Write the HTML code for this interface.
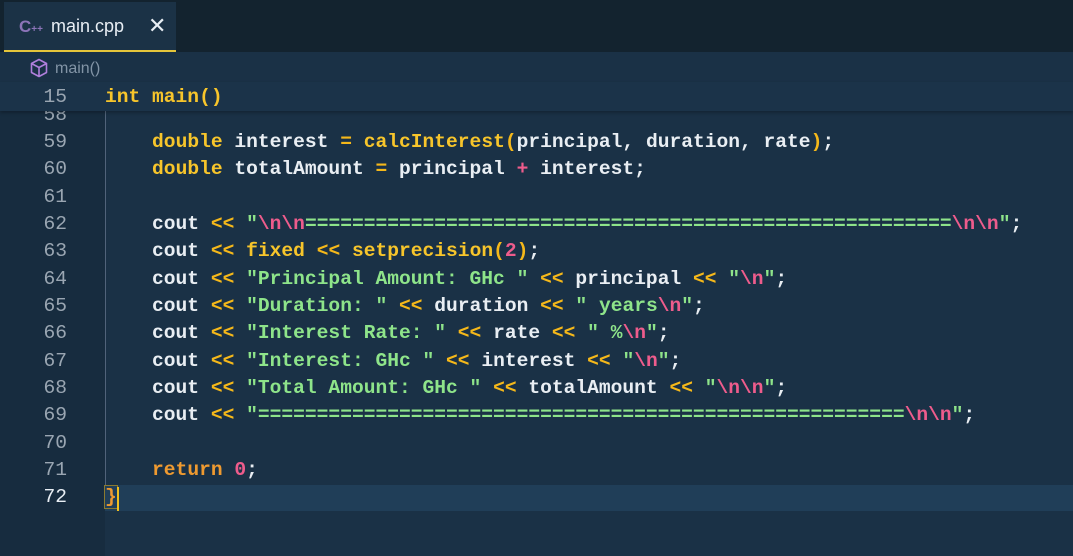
<!DOCTYPE html>
<html><head><meta charset="utf-8"><style>
html,body{margin:0;padding:0;width:1073px;height:556px;overflow:hidden;background:#1a3146;}
.tabbar{position:absolute;left:0;top:0;width:1073px;height:52px;background:#13232f;}
.tab{position:absolute;left:4px;top:2px;width:172px;height:48px;background:#1b3246;border-bottom:2px solid #e5c53a;}
.tab .ic{position:absolute;left:15px;top:15px;font:bold 17px "Liberation Sans",sans-serif;color:#8c74b8;}
.tab .ic small{font-size:10px;}
.tab .nm{position:absolute;left:47px;top:14px;font:18px "Liberation Sans",sans-serif;color:#e8eef4;}
.tab .x{position:absolute;left:144px;top:11px;font:22px "Liberation Sans",sans-serif;color:#e8eef4;}
.gutter{position:absolute;left:0;top:52px;width:105px;height:504px;background:#172c3f;}
.bc{position:absolute;left:0;top:52px;width:1073px;height:30px;background:#1a3146;}
.bc span{position:absolute;left:55px;top:8px;font:16px "Liberation Sans",sans-serif;color:#8294a6;}
.sticky{position:absolute;left:0;top:82px;width:1073px;height:29px;background:#1b3349;box-shadow:0 2px 3px rgba(0,0,0,.25);z-index:3;}
.cur{position:absolute;left:105px;top:485px;width:968px;height:26px;background:#203e58;}
.guide{position:absolute;left:105px;top:111px;width:1px;height:374px;background:#51637a;}
.ln{position:absolute;left:0;width:67px;text-align:right;font:19.6px "Liberation Mono",monospace;color:#9aa6b2;}
.code{position:absolute;left:105px;font:bold 19.6px "Liberation Mono",monospace;color:#e9eef3;white-space:pre;}
.k{color:#f7c52b}.o{color:#f5b81a}.s{color:#8ee48a}.e{color:#ee5c8c}.n{color:#ee5c8c}.r{color:#ef9a30}
</style></head><body>
<div class="tabbar"><div class="tab"><span class="ic">C<small>++</small></span><span class="nm">main.cpp</span><span class="x">✕</span></div></div>
<div class="gutter"></div>
<div class="bc"><svg style="position:absolute;left:30px;top:58px" width="18" height="20"></svg><span>main()</span></div>
<svg style="position:absolute;left:30px;top:58px;z-index:4" width="18" height="20" viewBox="0 0 18 20"><path d="M9 1.5L16.5 5.5V14.5L9 18.5L1.5 14.5V5.5Z M1.5 5.5L9 9.5L16.5 5.5 M9 9.5V18.5" fill="none" stroke="#b07fdc" stroke-width="1.6" stroke-linejoin="round"/></svg>
<div class="sticky"><div class="ln" style="top:4px">15</div><div class="code" style="top:4px"><span class="k">int main()</span></div></div>
<div class="cur"></div>
<div class="guide"></div>
<div class="ln" style="top:104px;">58</div>
<div id="lines"></div>
<div class="ln" style="top:131px">59</div><div class="code" style="top:131px">    <span class="k">double</span> interest <span class="o">=</span> <span class="k">calcInterest</span><span class="o">(</span>principal, duration, rate<span class="o">)</span>;</div>
<div class="ln" style="top:158px">60</div><div class="code" style="top:158px">    <span class="k">double</span> totalAmount <span class="o">=</span> principal <span class="e">+</span> interest;</div>
<div class="ln" style="top:186px">61</div>
<div class="ln" style="top:213px">62</div><div class="code" style="top:213px">    cout <span class="o">&lt;&lt;</span> <span class="s">"<span class="e">\n\n</span>=======================================================<span class="e">\n\n</span>"</span>;</div>
<div class="ln" style="top:240px">63</div><div class="code" style="top:240px">    cout <span class="o">&lt;&lt;</span> <span class="k">fixed</span> <span class="o">&lt;&lt;</span> <span class="k">setprecision</span><span class="o">(</span><span class="n">2</span><span class="o">)</span>;</div>
<div class="ln" style="top:268px">64</div><div class="code" style="top:268px">    cout <span class="o">&lt;&lt;</span> <span class="s">"Principal Amount: GHc "</span> <span class="o">&lt;&lt;</span> principal <span class="o">&lt;&lt;</span> <span class="s">"<span class="e">\n</span>"</span>;</div>
<div class="ln" style="top:295px">65</div><div class="code" style="top:295px">    cout <span class="o">&lt;&lt;</span> <span class="s">"Duration: "</span> <span class="o">&lt;&lt;</span> duration <span class="o">&lt;&lt;</span> <span class="s">" years<span class="e">\n</span>"</span>;</div>
<div class="ln" style="top:322px">66</div><div class="code" style="top:322px">    cout <span class="o">&lt;&lt;</span> <span class="s">"Interest Rate: "</span> <span class="o">&lt;&lt;</span> rate <span class="o">&lt;&lt;</span> <span class="s">" %<span class="e">\n</span>"</span>;</div>
<div class="ln" style="top:350px">67</div><div class="code" style="top:350px">    cout <span class="o">&lt;&lt;</span> <span class="s">"Interest: GHc "</span> <span class="o">&lt;&lt;</span> interest <span class="o">&lt;&lt;</span> <span class="s">"<span class="e">\n</span>"</span>;</div>
<div class="ln" style="top:377px">68</div><div class="code" style="top:377px">    cout <span class="o">&lt;&lt;</span> <span class="s">"Total Amount: GHc "</span> <span class="o">&lt;&lt;</span> totalAmount <span class="o">&lt;&lt;</span> <span class="s">"<span class="e">\n\n</span>"</span>;</div>
<div class="ln" style="top:404px">69</div><div class="code" style="top:404px">    cout <span class="o">&lt;&lt;</span> <span class="s">"=======================================================<span class="e">\n\n</span>"</span>;</div>
<div class="ln" style="top:432px">70</div>
<div class="ln" style="top:459px">71</div><div class="code" style="top:459px">    <span class="r">return</span> <span class="n">0</span>;</div>
<div class="ln" style="top:486px;color:#e8eef4">72</div><div class="code" style="top:486px"><span class="r" style="outline:1px solid #8a7a30">}</span></div>
<div style="position:absolute;left:117px;top:487px;width:2px;height:24px;background:#f0c020"></div>
</body></html>
